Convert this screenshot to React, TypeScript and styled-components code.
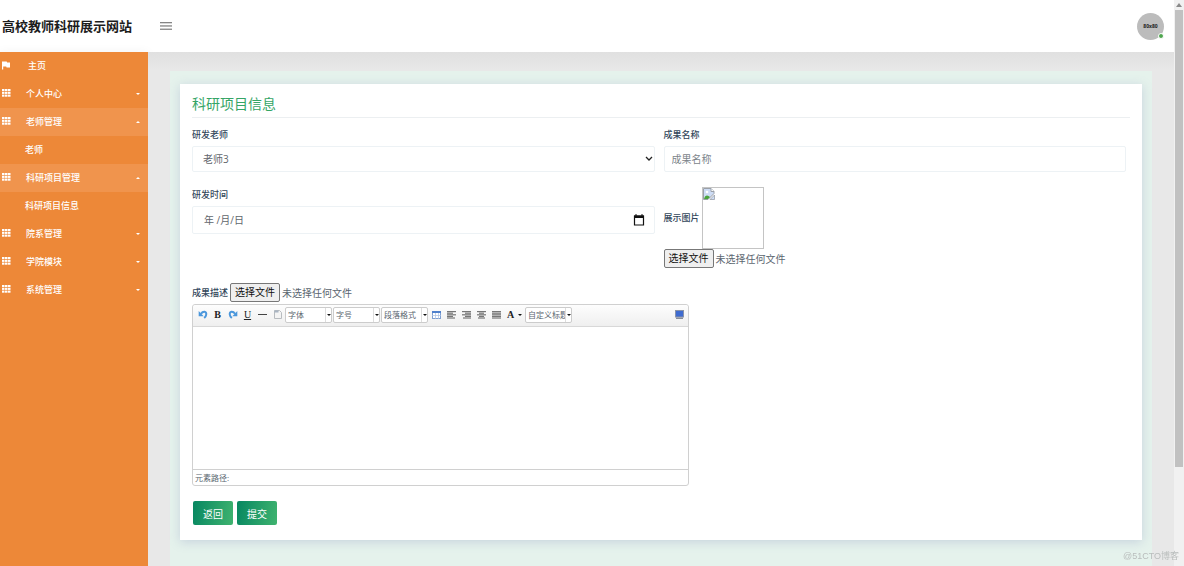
import React from "react";
import styled, { createGlobalStyle, css } from "styled-components";

const GlobalStyle = createGlobalStyle`
  *, *::before, *::after { box-sizing: border-box; }
  body {
    margin: 0;
    background: #e8e8e8;
    color: #5b6670;
    font-family: "Open Sans", "Noto Sans CJK SC", sans-serif;
    font-size: 10px;
    line-height: 16px;
  }
  button, input, select, textarea { font-family: inherit; font-size: inherit; color: inherit; }
`;

/* ---------- page frame ---------- */

const Shell = styled.div`
  display: grid;
  grid-template-columns: minmax(0, 1fr) 10px;
  height: 100vh;
  overflow: hidden;
`;

const Page = styled.div`
  display: flex;
  flex-direction: column;
  min-height: 0;
`;

const Header = styled.header`
  display: flex;
  align-items: center;
  flex: none;
  height: 52px;
  padding: 0 10px 0 2px;
  background: #fff;
`;

const Brand = styled.h1`
  width: 158px;
  margin: 0;
  color: #1c1c1c;
  font-size: 13px;
  font-weight: 700;
  line-height: 20px;
  white-space: nowrap;
`;

const MenuToggle = styled.button`
  display: flex;
  padding: 0;
  border: 0;
  background: none;
  color: #858585;
`;

const Avatar = styled.div`
  position: relative;
  display: grid;
  place-items: center;
  width: 27px;
  height: 27px;
  margin-left: auto;
  border-radius: 50%;
  background: #bcbcbc;
  color: #222;
  font-size: 5px;
  font-weight: 700;
  line-height: 8px;
`;

const StatusDot = styled.span`
  position: absolute;
  right: 0;
  bottom: 1px;
  width: 6px;
  height: 6px;
  border: 1px solid #fff;
  border-radius: 50%;
  background: #4fa64f;
`;

const Body = styled.div`
  display: grid;
  grid-template-columns: 148px minmax(0, 1fr);
  flex: 1;
  min-height: 0;
`;

/* ---------- sidebar ---------- */

const Sidebar = styled.nav`
  background: #ed8838;
  box-shadow: 0 0 10px rgba(0, 0, 0, 0.05);
`;

const MenuList = styled.ul`
  margin: 0;
  padding: 0;
  list-style: none;
`;

const MenuLink = styled.a<{ $open?: boolean; $sub?: boolean }>`
  display: flex;
  align-items: center;
  height: 28px;
  padding: 0 8px 0 ${(p) => (p.$sub ? 25 : 2)}px;
  background: ${(p) => (p.$open ? "#f0944d" : "transparent")};
  color: #fff;
  font-size: 9px;
  font-weight: 500;
  text-decoration: none;
`;

const MenuIcon = styled.span`
  display: flex;
  width: 24px;
  padding-bottom: 2px;
`;

const MenuText = styled.span<{ $home?: boolean }>`
  flex: 1;
  padding-left: ${(p) => (p.$home ? 2 : 0)}px;
`;

const Caret = styled.span<{ $up?: boolean; $dark?: boolean }>`
  width: 0;
  height: 0;
  border: 2px solid transparent;
  ${(p) =>
    p.$up
      ? css`border-top-width: 0; border-bottom-color: #fff;`
      : css`border-bottom-width: 0; border-top-color: ${p.$dark ? "#111" : "#fff"};`}
`;

/* ---------- content ---------- */

const Content = styled.main`
  display: flex;
  min-height: 0;
  padding: 19px 22px 0;
  background: linear-gradient(#e0e0e0, #e8e8e8 18px);
`;

const Panel = styled.div`
  flex: 1;
  min-width: 0;
  padding: 13px 10px 27px;
  background: #e5f2ec;
`;

const Card = styled.section`
  padding: 12px 12px 15px;
  background: #fff;
  box-shadow: 0 2px 10px rgba(130, 140, 190, 0.3);
`;

const CardTitle = styled.h2`
  margin: 0 0 9px;
  padding-bottom: 5px;
  border-bottom: 1px solid #eceff1;
  color: #35a566;
  font-size: 14px;
  font-weight: 400;
  line-height: 16px;
`;

const Form = styled.form`
  padding-right: 4px;
`;

const Row = styled.div`
  display: grid;
  grid-template-columns: repeat(2, minmax(0, 1fr));
  column-gap: 9px;
  margin-bottom: 15px;
`;

const Label = styled.label<{ $block?: boolean }>`
  display: ${(p) => (p.$block ? "block" : "inline-block")};
  padding-bottom: ${(p) => (p.$block ? 3 : 0)}px;
  color: #33475b;
  font-size: 9px;
  font-weight: 500;
`;

const fieldBox = css`
  width: 100%;
  border: 1px solid #edf2f5;
  border-radius: 2px;
  background: #fff;
  color: #5f666c;
  outline: 0;
`;

const TextField = styled.input`
  ${fieldBox}
  height: 26px;
  padding: 0 7px;
  &::placeholder { color: #7c848a; opacity: 1; }
`;

const Stack = styled.div`
  display: grid;
  align-items: center;
  > * { grid-area: 1 / 1; }
`;

const SelectField = styled.select`
  ${fieldBox}
  appearance: none;
  height: 26px;
  padding: 0 10px;
`;

const SelectArrow = styled.svg`
  justify-self: end;
  margin-right: 2px;
  pointer-events: none;
`;

const DateField = styled.input`
  ${fieldBox}
  height: 28px;
  padding: 0 8px 0 11px;
  &::-webkit-datetime-edit { color: transparent; }
  &::-webkit-calendar-picker-indicator { width: 14px; height: 14px; padding: 0; opacity: 0; }
`;

const DateHint = styled.span`
  padding-left: 12px;
  color: #5f666c;
  pointer-events: none;
`;

const CalendarIcon = styled.svg`
  justify-self: end;
  margin-right: 10px;
  pointer-events: none;
`;

const Inline = styled.div`
  display: flex;
  align-items: center;
  gap: 2px;
`;

const ImageSlot = styled.div`
  width: 62px;
  height: 62px;
  border: 1px solid #c4c4c4;
`;

const FileBox = styled.div`
  position: relative;
  display: flex;
  align-items: center;
  gap: 2px;
  width: fit-content;
  height: 19px;
`;

const FileInput = styled.input`
  position: absolute;
  inset: 0;
  width: 100%;
  opacity: 0;
`;

const FileButton = styled.label`
  height: 19px;
  padding: 0 4px;
  border: 1px solid #777;
  border-radius: 2px;
  background: #efefef;
  color: #111;
  line-height: 17px;
`;

/* ---------- rich text editor ---------- */

const Editor = styled.div`
  width: 100%;
  max-width: 497px;
  margin-top: 2px;
  border: 1px solid #d0d0d0;
  border-radius: 3px;
  font-size: 8px;
`;

const Toolbar = styled.div`
  display: flex;
  align-items: center;
  height: 22px;
  padding: 0 1px 2px 2px;
  border-bottom: 1px solid #d8d8d8;
  border-radius: 3px 3px 0 0;
  background: linear-gradient(#fdfdfd, #efefef);
`;

const Tool = styled.button<{ $wide?: boolean; $end?: boolean }>`
  display: flex;
  align-items: center;
  justify-content: center;
  gap: 4px;
  width: ${(p) => (p.$wide ? 21 : 15)}px;
  height: 16px;
  margin-left: ${(p) => (p.$end ? "auto" : "0")};
  padding: 0;
  border: 0;
  background: none;
  color: #222;
  font: 700 10px/16px "Liberation Serif", serif;
`;

const Underlined = styled.span`
  font-weight: 400;
  text-decoration: underline;
`;

const Combo = styled.button`
  display: flex;
  align-items: center;
  width: 47px;
  height: 16px;
  margin-right: 1px;
  padding: 0 0 0 2px;
  border: 1px solid #ccc;
  border-radius: 2px;
  background: #fff;
  color: #5b6670;
  font-size: 8px;
  line-height: 14px;
`;

const ComboText = styled.span`
  flex: 1;
  min-width: 0;
  margin-right: 1px;
  border-right: 1px solid #ddd;
  overflow: hidden;
  text-align: left;
  white-space: nowrap;
`;

const EditorArea = styled.textarea`
  display: block;
  width: 100%;
  height: 142px;
  padding: 6px;
  border: 0;
  outline: 0;
  resize: none;
  background: #fff;
`;

const EditorFooter = styled.div`
  height: 16px;
  padding-left: 2px;
  border-top: 1px solid #d0d0d0;
  line-height: 15px;
`;

const Actions = styled.div`
  display: flex;
  gap: 4px;
  padding: 15px 0 0 1px;
`;

const ActionButton = styled.button`
  width: 40px;
  height: 24px;
  padding: 0;
  border: 0;
  border-radius: 2px;
  background: linear-gradient(100deg, #078761, #3fb36f);
  color: #fff;
`;

/* ---------- scroll rail ---------- */

const Rail = styled.div`
  display: grid;
  grid-template-rows: 10px minmax(0, 457fr) minmax(0, 99fr);
  background: #f1f1f1;
`;

const RailArrow = styled.svg`
  margin: 3px 0 0 2px;
`;

const Thumb = styled.div`
  margin: 0 1px;
  background: #c1c1c1;
`;

const Watermark = styled.div`
  position: fixed;
  right: 5px;
  bottom: 2px;
  z-index: 2;
  color: #b9bdbc;
  font-family: "Liberation Sans", "Noto Sans CJK SC", sans-serif;
  font-size: 9px;
`;

/* ---------- icons ---------- */

const GridIcon = () => (
  <svg width="9" height="8" viewBox="0 0 9 8" fill="#fff">
    {[0, 2.8, 5.6].map((y) =>
      [0, 3, 6].map((x) => <rect key={`${x}-${y}`} x={x} y={y} width="2.500" height="2.100" />)
    )}
  </svg>
);

const FlagIcon = () => (
  <svg width="9" height="9" viewBox="0 0 9 9" fill="#fff">
    <path d="M0 .5h4.700l.4 1.100H8v5H4.600l-.4-1.100H1.200V8.500H0z" />
  </svg>
);

const AlignIcon = ({ rows }: { rows: [number, number][] }) => (
  <svg width="10" height="8" viewBox="0 0 10 8">
    {rows.map(([x, w], i) => (
      <rect key={i} x={x} y={i * 1.6} width={w} height="1.200" fill="#777" />
    ))}
  </svg>
);

const alignments: { name: string; rows: [number, number][] }[] = [
  { name: "左对齐", rows: [[0, 9], [0, 6], [0, 9], [0, 6], [0, 8]] },
  { name: "右对齐", rows: [[0, 9], [3, 6], [0, 9], [3, 6], [1, 8]] },
  { name: "居中", rows: [[0, 9], [2, 5], [0, 9], [2, 5], [1, 7]] },
  { name: "两端对齐", rows: [[0, 9], [0, 9], [0, 9], [0, 9], [0, 9]] },
];

const TurnIcon = ({ flip }: { flip?: boolean }) => (
  <svg width="10" height="9" viewBox="0 0 10 9">
    <g transform={flip ? "translate(10 0) scale(-1 1)" : undefined}>
      <path d="M3 3.800C5 .8 8.800 1.200 8.200 4.600 8 6 7.200 7.200 6.200 8" fill="none" stroke="#4b97dc" strokeWidth="2" />
      <path d="M.7 1v5.200h5z" fill="#4b97dc" />
    </g>
  </svg>
);

const menu = [
  { label: "个人中心" },
  { label: "老师管理", child: "老师" },
  { label: "科研项目管理", child: "科研项目信息" },
  { label: "院系管理" },
  { label: "学院模块" },
  { label: "系统管理" },
];

function FilePicker({ id }: { id: string }) {
  return (
    <FileBox>
      <FileButton htmlFor={id}>选择文件</FileButton>
      <span>未选择任何文件</span>
      <FileInput id={id} type="file" />
    </FileBox>
  );
}

function ComboBox({ text }: { text: string }) {
  return (
    <Combo type="button">
      <ComboText>{text}</ComboText>
      <Caret $dark />
    </Combo>
  );
}

function RichEditor() {
  return (
    <Editor>
      <Toolbar>
        <Tool type="button" aria-label="撤销"><TurnIcon /></Tool>
        <Tool type="button" aria-label="加粗">B</Tool>
        <Tool type="button" aria-label="重做"><TurnIcon flip /></Tool>
        <Tool type="button" aria-label="下划线"><Underlined>U</Underlined></Tool>
        <Tool type="button" aria-label="分隔线">
          <svg width="9" height="1"><rect width="9" height="1" fill="#444" /></svg>
        </Tool>
        <Tool type="button" aria-label="新建">
          <svg width="8" height="9" viewBox="0 0 8 9">
            <path d="M.5.5h5l2 2v6h-7z" fill="#f4f4f4" stroke="#b8bcc0" />
            <path d="M.5.5h4v2h-4z" fill="#a9b4c2" />
          </svg>
        </Tool>
        <ComboBox text="字体" />
        <ComboBox text="字号" />
        <ComboBox text="段落格式" />
        <Tool type="button" aria-label="表格">
          <svg width="9" height="8" viewBox="0 0 9 8">
            <rect x=".5" y=".5" width="8" height="7" fill="#fff" stroke="#7f9fd0" />
            <rect width="9" height="2" fill="#4f80cc" />
            <path d="M0 4.500h9M3.500 2v6M6.500 2v6" stroke="#a9c0e4" strokeWidth=".7" />
          </svg>
        </Tool>
        {alignments.map((a) => (
          <Tool key={a.name} type="button" aria-label={a.name}><AlignIcon rows={a.rows} /></Tool>
        ))}
        <Tool type="button" $wide aria-label="字体颜色">A<Caret $dark /></Tool>
        <ComboBox text="自定义标题" />
        <Tool type="button" $end aria-label="全屏">
          <svg width="9" height="9" viewBox="0 0 9 9">
            <rect x=".5" y=".5" width="8" height="6.500" fill="#3f6bd0" stroke="#8a93a8" />
            <path d="M1 7.500h7V9H1z" fill="#868d9a" />
          </svg>
        </Tool>
      </Toolbar>
      <EditorArea aria-label="成果描述" />
      <EditorFooter>元素路径:</EditorFooter>
    </Editor>
  );
}

export default function App() {
  return (
    <>
      <GlobalStyle />
      <Shell>
        <Page>
          <Header>
            <Brand>高校教师科研展示网站</Brand>
            <MenuToggle type="button" aria-label="菜单">
              <svg width="12" height="8" viewBox="0 0 12 8" fill="currentColor">
                <rect width="12" height="1.300" />
                <rect y="3.300" width="12" height="1.300" />
                <rect y="6.600" width="12" height="1.300" />
              </svg>
            </MenuToggle>
            <Avatar>80x80<StatusDot /></Avatar>
          </Header>
          <Body>
            <Sidebar>
              <MenuList>
                <li>
                  <MenuLink href="#">
                    <MenuIcon><FlagIcon /></MenuIcon>
                    <MenuText $home>主页</MenuText>
                  </MenuLink>
                </li>
                {menu.map((m) => (
                  <li key={m.label}>
                    <MenuLink href="#" $open={!!m.child}>
                      <MenuIcon><GridIcon /></MenuIcon>
                      <MenuText>{m.label}</MenuText>
                      <Caret $up={!!m.child} />
                    </MenuLink>
                    {m.child && <MenuLink href="#" $sub>{m.child}</MenuLink>}
                  </li>
                ))}
              </MenuList>
            </Sidebar>
            <Content>
              <Panel>
                <Card>
                  <CardTitle>科研项目信息</CardTitle>
                  <Form>
                    <Row>
                      <div>
                        <Label $block htmlFor="teacher">研发老师</Label>
                        <Stack>
                          <SelectField id="teacher"><option>老师3</option></SelectField>
                          <SelectArrow width="8" height="6" viewBox="0 0 8 6">
                            <path d="M1 1l3 3 3-3" fill="none" stroke="#222" strokeWidth="1.300" />
                          </SelectArrow>
                        </Stack>
                      </div>
                      <div>
                        <Label $block htmlFor="name">成果名称</Label>
                        <TextField id="name" placeholder="成果名称" />
                      </div>
                    </Row>
                    <Row>
                      <div>
                        <Label $block htmlFor="date">研发时间</Label>
                        <Stack>
                          <DateField id="date" type="date" />
                          <DateHint>年 /月/日</DateHint>
                          <CalendarIcon width="12" height="12" viewBox="0 0 12 12">
                            <path d="M1.500 2h9v9h-9z" fill="none" stroke="#111" strokeWidth="1.200" />
                            <path d="M1 1.500h10V4H1zM2.500 0h1v2h-1zM8.500 0h1v2h-1z" fill="#111" />
                          </CalendarIcon>
                        </Stack>
                      </div>
                      <div>
                        <Inline>
                          <Label htmlFor="picture">展示图片</Label>
                          <ImageSlot>
                            <svg width="12" height="12" viewBox="0 0 12 12">
                              <path d="M.5.500h7.500l3 3v2L5 11.500H.5z" fill="#cddcf5" stroke="#9aa0a8" />
                              <path d="M8 .5v3h3" fill="#fff" stroke="#9aa0a8" />
                              <path d="M1 11c1-4 3.500-4.500 6-2l-2 2z" fill="#4aa53c" />
                              <path d="M11.500 7v4.500H7z" fill="#cddcf5" stroke="#9aa0a8" strokeWidth=".8" />
                              <circle cx="4" cy="4" r="1.300" fill="#fff" />
                            </svg>
                          </ImageSlot>
                        </Inline>
                        <FilePicker id="picture" />
                      </div>
                    </Row>
                    <Inline>
                      <Label htmlFor="attachment">成果描述</Label>
                      <FilePicker id="attachment" />
                    </Inline>
                    <RichEditor />
                    <Actions>
                      <ActionButton type="button">返回</ActionButton>
                      <ActionButton type="submit">提交</ActionButton>
                    </Actions>
                  </Form>
                </Card>
              </Panel>
            </Content>
          </Body>
        </Page>
        <Rail>
          <RailArrow width="6" height="4" viewBox="0 0 6 4"><path d="M0 4l3-4 3 4z" fill="#8a8a8a" /></RailArrow>
          <Thumb />
        </Rail>
      </Shell>
      <Watermark>@51CTO博客</Watermark>
    </>
  );
}
